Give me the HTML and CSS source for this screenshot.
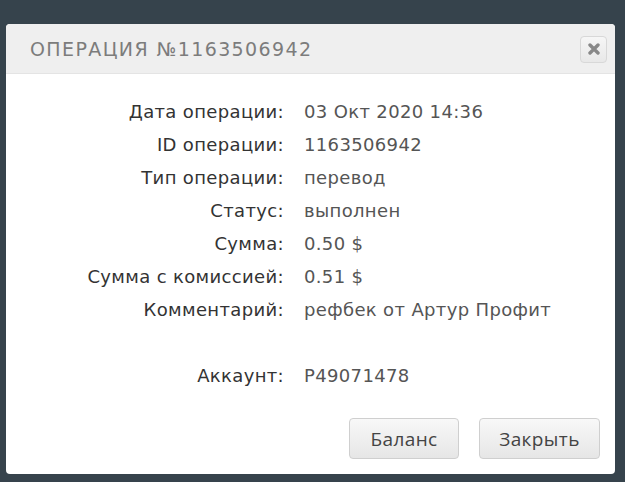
FILE: index.html
```html
<!DOCTYPE html>
<html>
<head>
<meta charset="utf-8">
<link rel="stylesheet" href="styles.css">
</head>
<body>
<div class="dialog">
  <div class="header">
    <div class="title">ОПЕРАЦИЯ №1163506942</div>
    <button class="close" aria-label="close">
      <svg width="12" height="12" viewBox="0 0 12 12"><path d="M2 2 L10 10 M10 2 L2 10" stroke="#888" stroke-width="3.4" stroke-linecap="round"/></svg>
    </button>
  </div>
  <div class="content">
    <div class="grid">
      <div class="label">Дата операции:</div><div class="value">03 Окт 2020 14:36</div>
      <div class="label">ID операции:</div><div class="value">1163506942</div>
      <div class="label">Тип операции:</div><div class="value">перевод</div>
      <div class="label">Статус:</div><div class="value">выполнен</div>
      <div class="label">Сумма:</div><div class="value">0.50 $</div>
      <div class="label">Сумма с комиссией:</div><div class="value">0.51 $</div>
      <div class="label">Комментарий:</div><div class="value">рефбек от Артур Профит</div>
      <div class="label"></div><div class="value"></div>
      <div class="label">Аккаунт:</div><div class="value">P49071478</div>
    </div>
    <div class="actions">
      <button class="btn btn-balance">Баланс</button>
      <button class="btn btn-close">Закрыть</button>
    </div>
  </div>
</div>
</body>
</html>
```
FILE: styles.css
```css
html, body {
  margin: 0;
  padding: 0;
  background: #36434c;
  height: 100%;
}
body {
  padding-top: 24px;
  padding-left: 6px;
  box-sizing: border-box;
}
.dialog {
  width: 609px;
  height: 450px;
  background: #fff;
  border-radius: 4px;
  overflow: hidden;
  display: flex;
  flex-direction: column;
}
.header {
  height: 50px;
  background: #efefef;
  border-bottom: 1px solid #e4e4e4;
  box-sizing: border-box;
  display: flex;
  align-items: center;
  justify-content: space-between;
  padding: 0 8px 0 24px;
}
.title {
  font-family: "DejaVu Sans", sans-serif;
  font-size: 19px;
  font-weight: 400;
  letter-spacing: 1.4px;
  color: #7c7c7c;
}
.close {
  width: 27px;
  height: 27px;
  border: 1px solid #d8d8d8;
  border-radius: 4px;
  background: linear-gradient(#f6f6f6, #e8e8e8);
  display: flex;
  align-items: center;
  justify-content: center;
  padding: 0;
  margin-top: 1px;
}
.content {
  flex: 1;
  display: flex;
  flex-direction: column;
  padding-top: 21px;
}
.grid {
  display: grid;
  grid-template-columns: 278px auto;
  column-gap: 20px;
  grid-auto-rows: 33px;
  align-items: center;
  font-family: "DejaVu Sans", sans-serif;
  font-size: 18px;
  letter-spacing: 0.35px;
}
.label {
  text-align: right;
  color: #333;
}
.value {
  color: #555;
}
.actions {
  display: flex;
  justify-content: flex-end;
  gap: 20px;
  padding-right: 15px;
  margin-top: 26px;
}
.btn {
  height: 41px;
  border: 1px solid #cfcfcf;
  border-radius: 4px;
  background: linear-gradient(#f8f8f8, #e6e6e6);
  font-family: "Open Sans", sans-serif;
  font-size: 19px;
  letter-spacing: 0.4px;
  color: #444;
  padding: 0;
}
.btn-balance { width: 110px; }
.btn-close { width: 121px; }
```
